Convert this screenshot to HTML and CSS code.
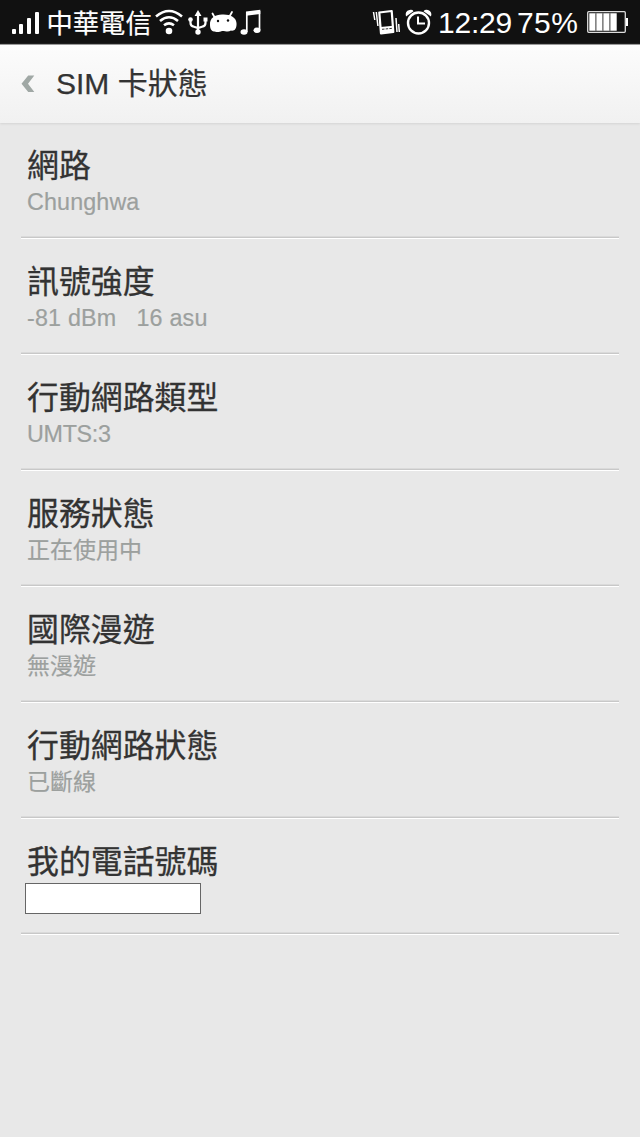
FILE: index.html
```html
<!DOCTYPE html>
<html lang="zh-Hant">
<head>
<meta charset="utf-8">
<title>SIM 卡狀態</title>
<link rel="stylesheet" href="styles.css">
</head>
<body>
<div class="screen">
  <div class="status">
    <svg class="signal" width="30" height="44" viewBox="0 0 30 44" fill="#fff"><rect x="1" y="29" width="4" height="5" rx="1"/><rect x="8" y="24" width="4" height="10" rx="1"/><rect x="16" y="18" width="4" height="16" rx="1"/><rect x="24" y="12" width="4" height="22" rx="1"/></svg>
    <span class="carrier">中華電信</span>
    <svg class="tray" width="112" height="44" viewBox="153 0 112 44" fill="none" stroke="#fff">
      <g stroke-width="2.6"><path d="M156 16.500Q169 5.500 182 16.500"/><path d="M160 21Q169 13.500 178 21"/><path d="M164 25.300Q169 21.500 174 25.300"/></g>
      <circle cx="169" cy="31" r="3.300" fill="#fff" stroke="none"/>
      <g stroke-width="2.200"><path d="M198 13V32M190.500 20V23Q190.500 26 194 26.800L198 28L202 26.800Q205.500 26 205.500 23V20"/></g>
      <path d="M198 10L201.500 16H194.500ZM203.500 17.500h4v4h-4z" fill="#fff" stroke="none"/><circle cx="190.500" cy="19.500" r="2.300" fill="#fff" stroke="none"/><circle cx="198" cy="32" r="2.700" fill="#fff" stroke="none"/>
      <path d="M210 25C209.500 18 215 14.500 222 14.500C230 14 236 17 236.500 23C237 29 234 31.500 231 30.500C228 32.500 224 30.500 222 31C218 33 215 31.500 214 31.500C211 31 210 28 210 25Z" fill="#fff" stroke="none"/><path d="M215 18L212.500 13.500M229.500 16.500L232 12" stroke-width="1.800" stroke-linecap="round"/><circle cx="218" cy="21" r="1.200" fill="#111" stroke="none"/><circle cx="228" cy="20.500" r="1.200" fill="#111" stroke="none"/>
      <path d="M246 11.500L260.300 9.700V14L246 15.800Z" fill="#fff" stroke="none"/><path d="M246.800 12V32M259.500 11V30" stroke-width="1.700"/><ellipse cx="244" cy="32" rx="3.500" ry="2.700" fill="#fff" stroke="none"/><ellipse cx="257" cy="30.300" rx="3.500" ry="2.700" fill="#fff" stroke="none"/>
    </svg>
    <svg class="alerts" width="64" height="44" viewBox="370 0 64 44" fill="none" stroke="#fff">
      <path d="M379.300 12.500L391.700 11L393.300 32L381 33.300Z" stroke-width="2.200" stroke-linejoin="round"/><path d="M380.500 27L393.300 25.800L394 32L381 33.500Z" fill="#fff" stroke="none"/><path d="M382 29.300L392.500 28.300" stroke="#333" stroke-width="1" stroke-dasharray="2.500 1.200"/>
      <path d="M373.500 12L374.800 20M376.300 12L377.900 26M396 18L397 32M398.700 24L399.300 32" stroke-width="1.500"/>
      <circle cx="418.500" cy="23" r="10.500" stroke-width="2.400"/><path d="M418 16.500V23.500H425" stroke-width="2"/><path d="M406 16.500Q404.500 11 409.500 10Q412.500 9.300 413.500 11.300ZM423.500 11.300Q425 9.300 428 10Q432.500 11.500 431 16.500Z" fill="#fff" stroke="none"/>
    </svg>
    <span class="time">12:29</span>
    <span class="percent">75%</span>
    <svg class="battery" width="42" height="44" viewBox="586 0 42 44"><rect x="587.700" y="11.700" width="37.600" height="20.600" rx="1" fill="none" stroke="#ddd" stroke-width="1.300"/><path d="M626 18h2v8h-2z" fill="#fff"/><path d="M589.300 13.300h6v17.400h-6zM596.300 13.300h6v17.400h-6zM603.300 13.300h6v17.400h-6zM610.300 13.300h6.400v17.400h-6.400z" fill="#fff"/><path d="M595.800 13v18M602.800 13v18M609.800 13v18" stroke="#999"/></svg>
  </div>
  <header class="header">
    <svg class="back" width="14" height="18" viewBox="0 0 14 18"><path d="M7.200 .5H13.300L7 8.700L13.300 17H7.200L.5 8.700Z" fill="#a0a8a5"/></svg>
    <h1 class="heading">SIM 卡狀態</h1>
  </header>
  <main class="list">
    <section class="item"><div class="name">網路</div><div class="value">Chunghwa</div></section>
    <section class="item"><div class="name">訊號強度</div><div class="value signal-value">-81 dBm&nbsp;&nbsp; 16 asu</div></section>
    <section class="item"><div class="name">行動網路類型</div><div class="value tight">UMTS:3</div></section>
    <section class="item"><div class="name">服務狀態</div><div class="value cjk">正在使用中</div></section>
    <section class="item"><div class="name">國際漫遊</div><div class="value cjk">無漫遊</div></section>
    <section class="item"><div class="name">行動網路狀態</div><div class="value cjk">已斷線</div></section>
    <section class="item"><div class="name">我的電話號碼</div><div class="phone"></div></section>
  </main>
</div>
</body>
</html>
```

FILE: styles.css
```css
* { box-sizing: border-box; }
body { margin: 0; background: #fff; font-family: "Liberation Sans", "Noto Sans CJK TC", sans-serif; }
.screen { width: 640px; height: 1137px; background: #e8e8e8; overflow: hidden; }
.status { height: 44px; display: flex; background: #111; color: #fff; line-height: 44px; white-space: nowrap; }
.status svg { flex: none; }
.signal { margin-left: 11px; }
.carrier { width: 106px; margin: 0 .5px 0 5.5px; font-size: 26.300px; font-family: "Noto Sans CJK TC", sans-serif; -webkit-text-stroke: .2px #fff; }
.alerts { margin-left: 105px; }
.time { width: 78px; margin-left: 4px; font-size: 30px; line-height: 46px; letter-spacing: -.2px; }
.percent { width: 64px; margin-left: 1px; font-size: 30px; line-height: 46px; letter-spacing: .4px; }
.battery { margin-left: 5px; }
.header { height: 79px; display: flex; align-items: center; padding-left: 21px; background: linear-gradient(#fcfcfc, #f1f1f1); border-top: 1px solid #999; box-shadow: 0 1px 2px #d4d4d4; }
.back { margin-bottom: 1px; }
.heading { margin: 0 0 0 21px; font-size: 30px; line-height: 40px; font-weight: 400; color: #333; -webkit-text-stroke: .25px #333; }
.list { padding: 0 21px; }
.item { height: 116px; padding: 20px 0 0 6px; border-bottom: 1px solid #fff; box-shadow: inset 0 -1px #c8c8c8, inset 0 -2px #dadada; }
.name { height: 44px; font-family: "Noto Sans CJK TC", sans-serif; font-size: 31.900px; line-height: 40px; color: #333; -webkit-text-stroke: .3px #333; }
.value { font-size: 23.300px; line-height: 30px; color: #9ca09e; letter-spacing: .13px; -webkit-text-stroke: .2px #9ca09e; }
.signal-value { letter-spacing: .2px; }
.tight { letter-spacing: -.3px; }
.cjk { margin-top: -2px; font-family: "Noto Sans CJK TC", sans-serif; font-size: 23px; letter-spacing: 0; }
.phone { width: 176px; height: 31px; margin-left: -2px; background: #fff; border: 1px solid #666; }
```
